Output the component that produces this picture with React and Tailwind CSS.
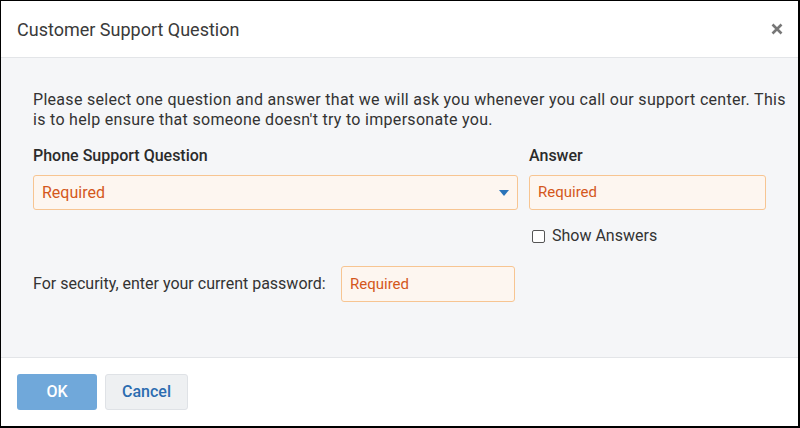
import React, { useState } from 'react';

export default function App() {
    const [show, setShow] = useState(false);

    return (
        <div className="w-[800px] h-[428px] bg-white border-black border-l border-t border-r-2 border-b-2 flex flex-col font-['Roboto',sans-serif] text-[#333]">
            <div className="h-[57px] shrink-0 flex items-center justify-between pl-[16px] pr-[14px] border-b border-[#e3e5e8]">
                <div className="text-[18px] text-[#3a3a3a]">Customer Support Question</div>
                <button className="text-[#777] w-[14px] h-[14px] flex items-center justify-center">
                    <svg width="12" height="12" viewBox="0 0 12 12">
                        <path d="M1.5 1.5 L10.5 10.5 M10.5 1.5 L1.5 10.5" stroke="#777" strokeWidth="2.6" strokeLinecap="butt" />
                    </svg>
                </button>
            </div>

            <div className="flex-1 bg-[#f5f6f8] pl-[32px] pr-[8px] pt-[32px] border-b border-[#e3e5e8]">
                <p className="w-[756px] text-[16px] leading-[20px] tracking-[0.3px] text-[#333]">
                    Please select one question and answer that we will ask you whenever you call our support center. This is to help ensure that someone doesn't try to impersonate you.
                </p>

                <div className="flex gap-[11px] mt-[16px]">
                    <div className="w-[485px]">
                        <div className="text-[16px] leading-[20px] font-medium text-[#2b2b2b] mb-[9px]">Phone Support Question</div>
                        <div className="h-[35px] bg-[#fdf6f0] border border-[#f7c592] rounded-[3px] flex items-center justify-between pl-[8px] pr-[8px]">
                            <span className="text-[16px] text-[#d4581c]">Required</span>
                            <svg width="10" height="6" viewBox="0 0 10 6"><path d="M0 0 L10 0 L5 6 Z" fill="#2a74b9" /></svg>
                        </div>
                    </div>
                    <div className="w-[237px]">
                        <div className="text-[16px] leading-[20px] font-medium text-[#2b2b2b] mb-[9px]">Answer</div>
                        <div className="h-[35px] bg-[#fdf6f0] border border-[#f7c592] rounded-[3px] flex items-center pl-[8px]">
                            <span className="text-[15px] text-[#d4581c]">Required</span>
                        </div>
                        <label className="flex items-center gap-[7px] mt-[16px] ml-[3px] text-[16px] leading-[20px] text-[#333]">
                            <input
                                type="checkbox"
                                checked={show}
                                onChange={() => setShow(!show)}
                                className="appearance-none w-[13px] h-[13px] border border-[#555] rounded-[2px] bg-white"
                            />
                            Show Answers
                        </label>
                    </div>
                </div>

                <div className="flex items-center mt-[20px]">
                    <span className="text-[16px] text-[#333] w-[308px]">For security, enter your current password:</span>
                    <div className="w-[174px] h-[36px] bg-[#fdf6f0] border border-[#f7c592] rounded-[3px] flex items-center pl-[8px]">
                        <span className="text-[15px] text-[#d4581c]">Required</span>
                    </div>
                </div>
            </div>

            <div className="h-[68px] shrink-0 flex items-start gap-[8px] pl-[16px] pt-[16px]">
                <button className="w-[80px] h-[36px] rounded-[3px] bg-[#70a8da] text-white text-[16px] font-medium">OK</button>
                <button className="w-[83px] h-[36px] rounded-[3px] bg-[#eef0f2] border border-[#dfe2e6] text-[#2b6cb0] text-[16px] font-medium">Cancel</button>
            </div>
        </div>
    );
}
